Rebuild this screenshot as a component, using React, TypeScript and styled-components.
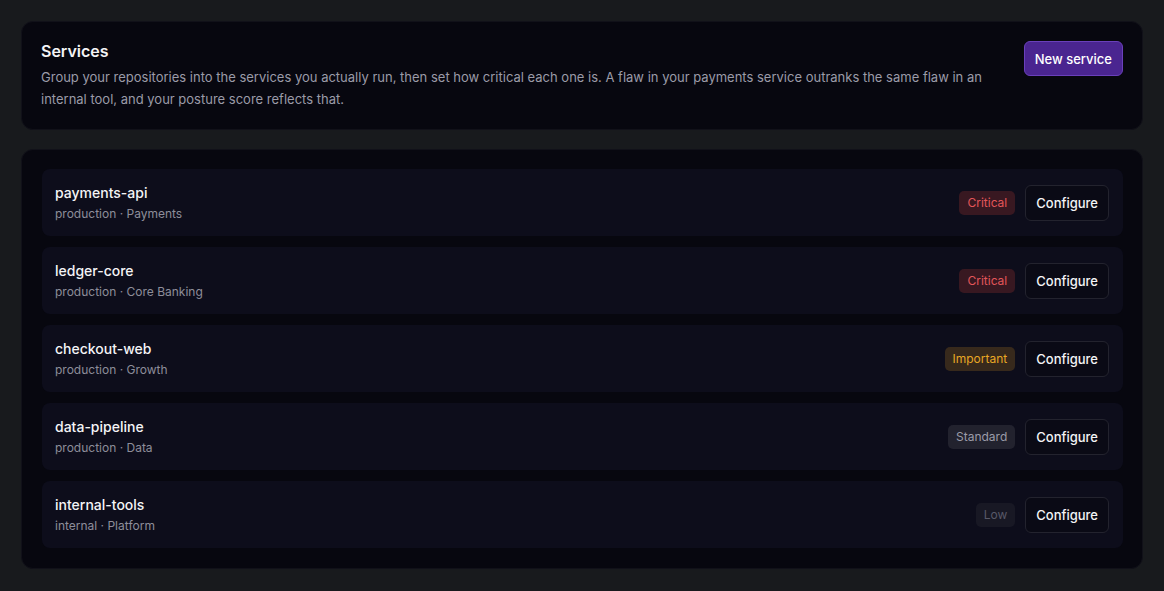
import React from "react";
import styled, { createGlobalStyle } from "styled-components";

const Global = createGlobalStyle`
  html, body { margin: 0; padding: 0; background: #181a1d; }
  body { font-family: Inter, "Noto Sans", sans-serif; -webkit-font-smoothing: antialiased; }
  * { box-sizing: border-box; }
`;

const Page = styled.div`
  padding: 21px;
  display: flex;
  flex-direction: column;
  gap: 19px;
`;

const Card = styled.section`
  background: #07070f;
  border: 1px solid #111119;
  border-radius: 12px;
`;

const Header = styled(Card)`
  display: flex;
  justify-content: space-between;
  align-items: flex-start;
  gap: 40px;
  padding: 19px;
`;

const HeaderText = styled.div`
  flex: 1;
`;

const Title = styled.h1`
  margin: 0 0 5px;
  font-size: 16px;
  font-weight: 600;
  color: #f4f4f6;
  line-height: 20px;
`;

const Desc = styled.p`
  margin: 0;
  font-size: 13px;
  line-height: 22px;
  color: #9b9ba8;
`;

const PrimaryButton = styled.button`
  flex: none;
  height: 35px;
  padding: 0 10px;
  background: #4a2590;
  border: 1px solid #6a40bb;
  border-radius: 6px;
  color: #fff;
  font-family: inherit;
  font-size: 13px;
  font-weight: 500;
`;

const List = styled(Card)`
  display: flex;
  flex-direction: column;
  gap: 11px;
  padding: 19px 19px 20px 20px;
`;

const Row = styled.div`
  height: 67px;
  background: #0d0d1b;
  border-radius: 8px;
  padding: 0 14px 0 13px;
  display: flex;
  align-items: center;
  justify-content: space-between;
`;

const Info = styled.div`
  display: flex;
  flex-direction: column;
  gap: 2px;
`;

const Name = styled.div`
  font-size: 14px;
  font-weight: 500;
  color: #f4f4f6;
  line-height: 20px;
`;

const Meta = styled.div`
  font-size: 12px;
  color: #8d8d9a;
  line-height: 18px;
`;

const Actions = styled.div`
  display: flex;
  align-items: center;
  gap: 10px;
`;

type Level = "critical" | "important" | "standard" | "low";

const badgeColors: Record<Level, { bg: string; fg: string }> = {
  critical: { bg: "#381821", fg: "#e3565a" },
  important: { bg: "#37291c", fg: "#e8a724" },
  standard: { bg: "#22222e", fg: "#9b9ba8" },
  low: { bg: "#181824", fg: "#585868" },
};

const Badge = styled.span<{ $level: Level }>`
  height: 24px;
  padding: 0 8px;
  display: inline-flex;
  align-items: center;
  border-radius: 5px;
  font-size: 12px;
  font-weight: 400;
  background: ${(p) => badgeColors[p.$level].bg};
  color: ${(p) => badgeColors[p.$level].fg};
`;

const GhostButton = styled.button`
  height: 36px;
  padding: 0 10px;
  background: #0a0a15;
  border: 1px solid #23232e;
  border-radius: 6px;
  color: #f4f4f6;
  font-family: inherit;
  font-size: 13px;
  font-weight: 500;
`;

const services: { name: string; meta: string; level: Level; label: string }[] = [
  { name: "payments-api", meta: "production · Payments", level: "critical", label: "Critical" },
  { name: "ledger-core", meta: "production · Core Banking", level: "critical", label: "Critical" },
  { name: "checkout-web", meta: "production · Growth", level: "important", label: "Important" },
  { name: "data-pipeline", meta: "production · Data", level: "standard", label: "Standard" },
  { name: "internal-tools", meta: "internal · Platform", level: "low", label: "Low" },
];

export default function App() {
  return (
    <>
      <Global />
      <Page>
        <Header>
          <HeaderText>
            <Title>Services</Title>
            <Desc>
              Group your repositories into the services you actually run, then set how critical each one is. A flaw in
              your payments service outranks the same flaw in an internal tool, and your posture score reflects that.
            </Desc>
          </HeaderText>
          <PrimaryButton>New service</PrimaryButton>
        </Header>
        <List>
          {services.map((s) => (
            <Row key={s.name}>
              <Info>
                <Name>{s.name}</Name>
                <Meta>{s.meta}</Meta>
              </Info>
              <Actions>
                <Badge $level={s.level}>{s.label}</Badge>
                <GhostButton>Configure</GhostButton>
              </Actions>
            </Row>
          ))}
        </List>
      </Page>
    </>
  );
}
